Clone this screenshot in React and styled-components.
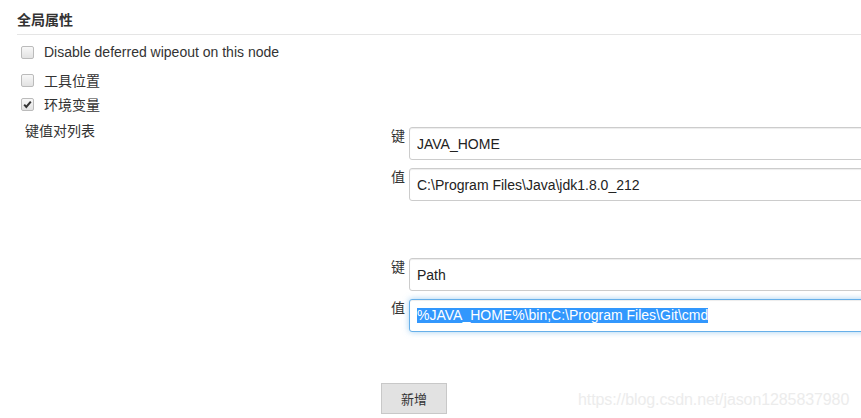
import React from "react";
import styled, { createGlobalStyle, css } from "styled-components";

const Global = createGlobalStyle`
  html, body { margin: 0; padding: 0; background: #fff; overflow: hidden; }
  body {
    font-family: "Liberation Sans", Arial, "Noto Sans CJK SC", sans-serif;
    font-size: 14px;
    color: #333;
  }
`;

const Page = styled.div`
  position: relative;
  width: 861px;
  height: 418px;
  padding: 11px 0 0 17px;
  box-sizing: border-box;
  overflow: hidden;
`;

const SectionTitle = styled.div`
  font-weight: bold;
  font-size: 14px;
  line-height: 18px;
  color: #333;
  padding-bottom: 5px;
  border-bottom: 1px solid #e5e5e5;
`;

const CheckList = styled.div`
  display: flex;
  flex-direction: column;
  padding-top: 6px;
`;

const CheckRow = styled.label`
  display: flex;
  align-items: center;
  gap: 10px;
  padding-left: 4px;
  height: ${(p) => p.$h}px;
  line-height: 18px;
`;

const Box = styled.span`
  position: relative;
  display: inline-block;
  width: 11px;
  height: 11px;
  border: 1px solid #bbb;
  border-radius: 2px;
  background: linear-gradient(#f8f8f8, #e2e2e2);
  flex: none;
`;

const CheckMark = styled.svg`
  position: absolute;
  left: 0;
  top: 0;
`;

const EnvBlock = styled.div`
  display: grid;
  grid-template-columns: 356px 1fr;
  padding-left: 8px;
  margin-top: 2px;
`;

const ListLabel = styled.div`
  line-height: 18px;
  padding-top: 9px;
`;

const Groups = styled.div`
  display: flex;
  flex-direction: column;
  padding-top: 14px;
`;

const PairGroup = styled.div`
  display: flex;
  flex-direction: column;
  gap: 8px;
  margin-bottom: ${(p) => p.$mb}px;
`;

const PairRow = styled.div`
  display: flex;
  align-items: flex-start;
  padding-left: 10px;
`;

const PairLabel = styled.span`
  width: 14px;
  margin-right: 4px;
  line-height: 18px;
  font-size: 14px;
  color: #333;
  flex: none;
`;

const fieldBase = css`
  box-sizing: border-box;
  width: 480px;
  height: 33px;
  padding: 0 7px;
  border: 1px solid #ccc;
  border-radius: 3px;
  font-family: "Liberation Sans", Arial, sans-serif;
  font-size: 14px;
  color: #222;
  background: #fff;
  box-shadow: inset 0 1px 1px rgba(0, 0, 0, 0.075);
  flex: none;
`;

const Field = styled.input`
  ${fieldBase}
  outline: none;
`;

const FocusedField = styled.div`
  ${fieldBase}
  display: flex;
  align-items: center;
  border-color: #66afe9;
  box-shadow: inset 0 1px 1px rgba(0, 0, 0, 0.075), 0 0 6px rgba(102, 175, 233, 0.6);
`;

const Selected = styled.span`
  background: #3297fd;
  color: #fff;
  line-height: 15px;
  white-space: pre;
`;

const AddButton = styled.button`
  width: 66px;
  height: 31px;
  border: 1px solid #c8c8c8;
  background: #e2e2e2;
  color: #333;
  font-family: "Noto Sans CJK SC", sans-serif;
  font-size: 13px;
  padding: 0;
  cursor: pointer;
`;

const Watermark = styled.div`
  position: absolute;
  left: 578px;
  top: 390px;
  font-family: "Liberation Sans", Arial, sans-serif;
  font-size: 16px;
  line-height: 20px;
  color: #ececec;
  letter-spacing: -0.1px;
  pointer-events: none;
`;

function Checkbox({ checked }) {
  return (
    <Box>
      {checked && (
        <CheckMark width="11" height="11" viewBox="0 0 11 11">
          <path d="M2.2 5.6 L4.3 7.9 L8.8 2.6" fill="none" stroke="#333" strokeWidth="2" />
        </CheckMark>
      )}
    </Box>
  );
}

const pairs = [
  { k: "JAVA_HOME", v: "C:\\Program Files\\Java\\jdk1.8.0_212" },
  { k: "Path", v: "%JAVA_HOME%\\bin;C:\\Program Files\\Git\\cmd", focused: true },
];

export default function App() {
  return (
    <>
      <Global />
      <Page>
        <SectionTitle>全局属性</SectionTitle>
        <CheckList>
          <CheckRow $h={22}>
            <Checkbox />
            <span>Disable deferred wipeout on this node</span>
          </CheckRow>
          <CheckRow $h={35}>
            <Checkbox />
            <span>工具位置</span>
          </CheckRow>
          <CheckRow $h={13}>
            <Checkbox checked />
            <span>环境变量</span>
          </CheckRow>
        </CheckList>
        <EnvBlock>
          <ListLabel>键值对列表</ListLabel>
          <Groups>
            {pairs.map((p, i) => (
              <PairGroup key={i} $mb={i === 0 ? 57 : 51}>
                <PairRow>
                  <PairLabel>键</PairLabel>
                  <Field readOnly defaultValue={p.k} />
                </PairRow>
                <PairRow>
                  <PairLabel>值</PairLabel>
                  {p.focused ? (
                    <FocusedField>
                      <Selected>{p.v}</Selected>
                    </FocusedField>
                  ) : (
                    <Field readOnly defaultValue={p.v} />
                  )}
                </PairRow>
              </PairGroup>
            ))}
            <div>
              <AddButton>新增</AddButton>
            </div>
          </Groups>
        </EnvBlock>
        <Watermark>https://blog.csdn.net/jason1285837980</Watermark>
      </Page>
    </>
  );
}
